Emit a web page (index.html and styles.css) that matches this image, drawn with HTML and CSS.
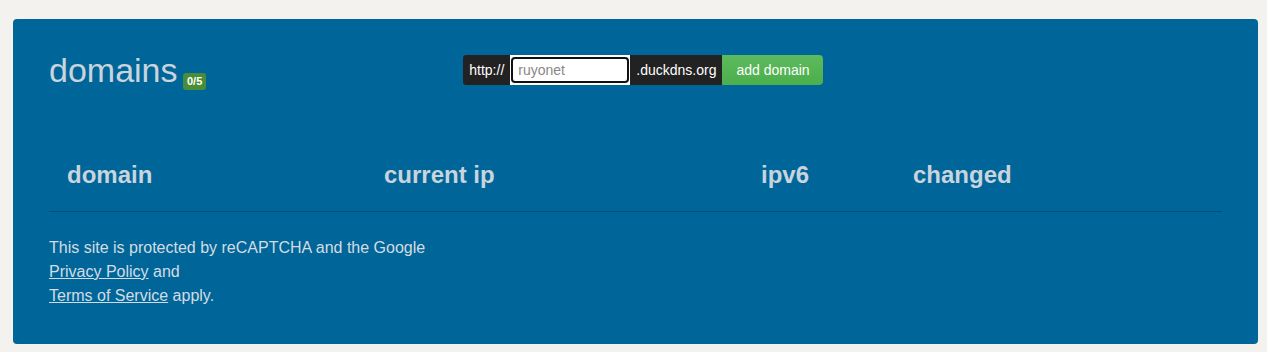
FILE: index.html
```html
<!DOCTYPE html>
<html lang="en">
<head>
    <meta charset="UTF-8">
    <title>Duck DNS - domains</title>
    <link rel="stylesheet" href="styles.css">
</head>
<body>

    <div class="panel">
        <div class="top-row">
            <h2 class="title">domains <span class="badge">0/5</span></h2>
            <form class="add-form">
                <span class="addon">http://</span>
                <span class="input-wrap"><input type="text" placeholder="ruyonet"></span>
                <span class="addon">.duckdns.org</span>
                <button type="submit">add domain</button>
            </form>
        </div>

        <table class="domains">
            <thead>
                <tr>
                    <th class="col-domain">domain</th>
                    <th class="col-ip">current ip</th>
                    <th class="col-ipv6">ipv6</th>
                    <th>changed</th>
                </tr>
            </thead>
        </table>

        <p class="captcha">
            This site is protected by reCAPTCHA and the Google<br>
            <a href="#">Privacy Policy</a> and<br>
            <a href="#">Terms of Service</a> apply.
        </p>
    </div>

</body>
</html>
```

FILE: styles.css
```css
body {
    margin: 0;
    padding: 19px 9px 9px 13px;
    background: #f4f2ee;
    font-family: "Liberation Sans", Arial, sans-serif;
}

.panel {
    background: #006699;
    border-radius: 4px;
    padding: 22px 36px 36px 36px;
    color: #cfd8e0;
}

.top-row {
    display: flex;
    align-items: flex-start;
}

.title {
    margin: 10px 0 0 0;
    font-size: 34px;
    font-weight: normal;
    color: #c9d4dd;
}

.badge {
    display: inline-block;
    background: #4a8d38;
    color: #fff;
    font-size: 11px;
    font-weight: bold;
    padding: 2px 4px;
    border-radius: 3px;
    line-height: 13px;
    vertical-align: -3px;
    margin-left: -4px;
}

.add-form {
    display: flex;
    margin: 14px 0 0 257px;
    height: 30px;
}

.addon {
    background: #222;
    color: #fff;
    font-size: 14px;
    line-height: 30px;
    padding: 0 6px;
    white-space: nowrap;
}

.addon:first-child {
    border-radius: 3px 0 0 3px;
}

.input-wrap {
    background: #fff;
    padding: 2px 1px;
    box-sizing: border-box;
    width: 120px;
}

.input-wrap input {
    box-sizing: border-box;
    width: 100%;
    height: 26px;
    border: 2px solid #111;
    border-radius: 4px;
    padding: 0 5px;
    font-family: "Liberation Sans", Arial, sans-serif;
    font-size: 14px;
    color: #555;
    outline: none;
}

.input-wrap input::placeholder {
    color: #888;
}

button {
    background: linear-gradient(#5dbb5d, #4cae4c);
    color: #fff;
    border: none;
    border-radius: 0 4px 4px 0;
    font-family: "Liberation Sans", Arial, sans-serif;
    font-size: 14px;
    padding: 0 14px;
    height: 30px;
    width: 101px;
    box-sizing: border-box;
    white-space: nowrap;
}

.domains {
    width: 100%;
    border-collapse: collapse;
    margin-top: 69px;
}

.domains th {
    text-align: left;
    font-size: 24px;
    font-weight: bold;
    color: #c9d4dd;
    padding: 2px 18px 22px 18px;
    border-bottom: 1px solid #00507c;
}

.col-domain {
    width: 281px;
}

.col-ip {
    width: 341px;
}

.col-ipv6 {
    width: 116px;
}

.captcha {
    margin: 24px 0 0 0;
    font-size: 16px;
    line-height: 24px;
    color: #d4dce3;
}

.captcha a {
    color: #d4dce3;
}
```
